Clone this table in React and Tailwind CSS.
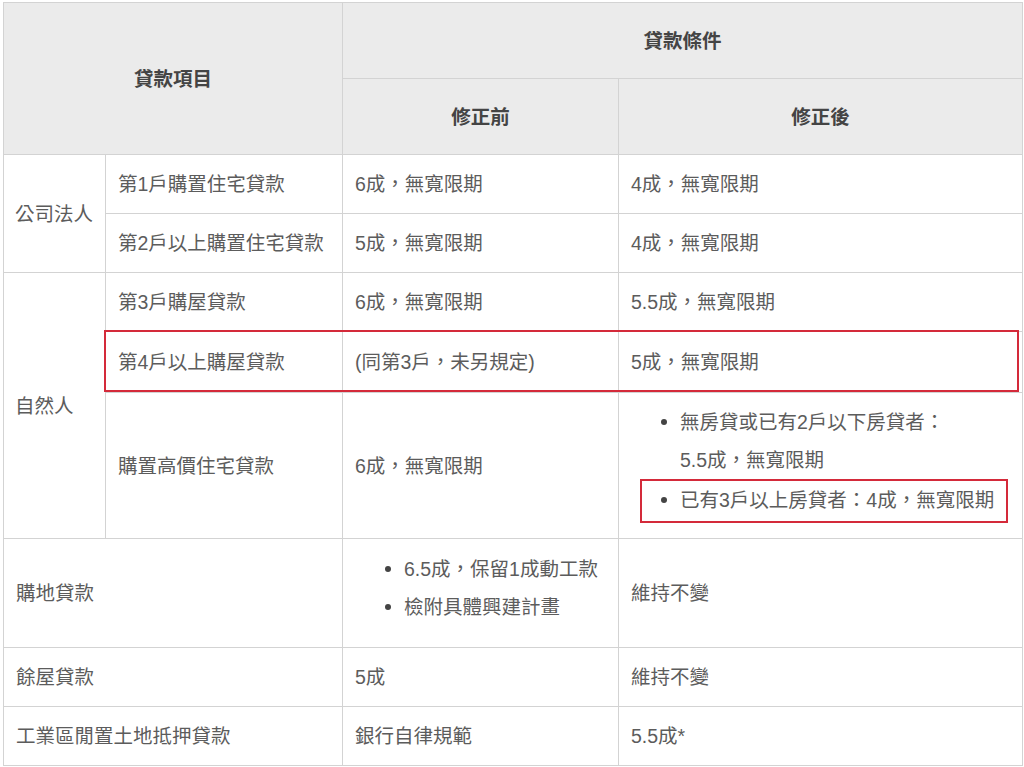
import React from "react";

const font = { fontFamily: '"Liberation Sans", "Noto Sans CJK TC", sans-serif' };

function Dot() {
  return (
    <span className="flex h-[38px] shrink-0 items-center">
      <span className="block h-[6px] w-[6px] rounded-full bg-[#444]" />
    </span>
  );
}

function Item({ children }) {
  return (
    <li className="flex pl-[30px]">
      <Dot />
      <span className="ml-[13px]">{children}</span>
    </li>
  );
}

const td = "whitespace-nowrap border border-[#d3d3d3] px-3 py-[10px] align-middle";
const th = "border border-[#d3d3d3] bg-[#ebebeb] px-3 text-center align-middle font-bold text-[#444]";

export default function App() {
  return (
    <div className="relative min-h-[767px] bg-white pl-[3px] pt-[2px] text-[19.5px] leading-[38px] text-[#5c5c5c]" style={font}>
      <table className="w-[1019px] table-fixed border-collapse">
        <colgroup>
          <col className="w-[102px]" />
          <col className="w-[237px]" />
          <col className="w-[276px]" />
          <col className="w-[404px]" />
        </colgroup>
        <thead>
          <tr className="h-[76px]">
            <th rowSpan={2} colSpan={2} className={th}>貸款項目</th>
            <th colSpan={2} className={th}>貸款條件</th>
          </tr>
          <tr className="h-[76px]">
            <th className={th}>修正前</th>
            <th className={th}>修正後</th>
          </tr>
        </thead>
        <tbody>
          <tr className="h-[58px]">
            <td rowSpan={2} className={td + " pl-[11px] pr-0"}>公司法人</td>
            <td className={td}>第1戶購置住宅貸款</td>
            <td className={td}>6成，無寬限期</td>
            <td className={td}>4成，無寬限期</td>
          </tr>
          <tr className="h-[58px]">
            <td className={td}>第2戶以上購置住宅貸款</td>
            <td className={td}>5成，無寬限期</td>
            <td className={td}>4成，無寬限期</td>
          </tr>
          <tr className="h-[58px]">
            <td rowSpan={3} className={td + " pl-[11px]"}>自然人</td>
            <td className={td}>第3戶購屋貸款</td>
            <td className={td}>6成，無寬限期</td>
            <td className={td}>5.5成，無寬限期</td>
          </tr>
          <tr className="h-[61px]">
            <td className={td}>第4戶以上購屋貸款</td>
            <td className={td}>(同第3戶，未另規定)</td>
            <td className={td}>5成，無寬限期</td>
          </tr>
          <tr className="h-[146px]">
            <td className={td}>購置高價住宅貸款</td>
            <td className={td}>6成，無寬限期</td>
            <td className="border border-[#d3d3d3] px-3 py-[8px] align-middle">
              <ul className="mb-[6px]">
                <Item>
                  無房貸或已有2戶以下房貸者：
                  <br />
                  5.5成，無寬限期
                </Item>
                <li className="ml-[9px] flex w-[368px] border-2 border-[#d42a3a] pb-[2px] pl-[19px]">
                  <Dot />
                  <span className="ml-[13px] whitespace-nowrap">已有3戶以上房貸者：4成，無寬限期</span>
                </li>
              </ul>
            </td>
          </tr>
          <tr className="h-[109px]">
            <td colSpan={2} className={td}>購地貸款</td>
            <td className={td}>
              <ul className="mb-[11px]">
                <Item>6.5成，保留1成動工款</Item>
                <Item>檢附具體興建計畫</Item>
              </ul>
            </td>
            <td className={td}>維持不變</td>
          </tr>
          <tr className="h-[58px]">
            <td colSpan={2} className={td}>餘屋貸款</td>
            <td className={td}>5成</td>
            <td className={td}>維持不變</td>
          </tr>
          <tr className="h-[58px]">
            <td colSpan={2} className={td}>工業區閒置土地抵押貸款</td>
            <td className={td}>銀行自律規範</td>
            <td className={td}>5.5成*</td>
          </tr>
        </tbody>
      </table>
      <div className="pointer-events-none absolute left-[104px] top-[330px] h-[62px] w-[915px] border-2 border-[#d42a3a]" />
    </div>
  );
}
